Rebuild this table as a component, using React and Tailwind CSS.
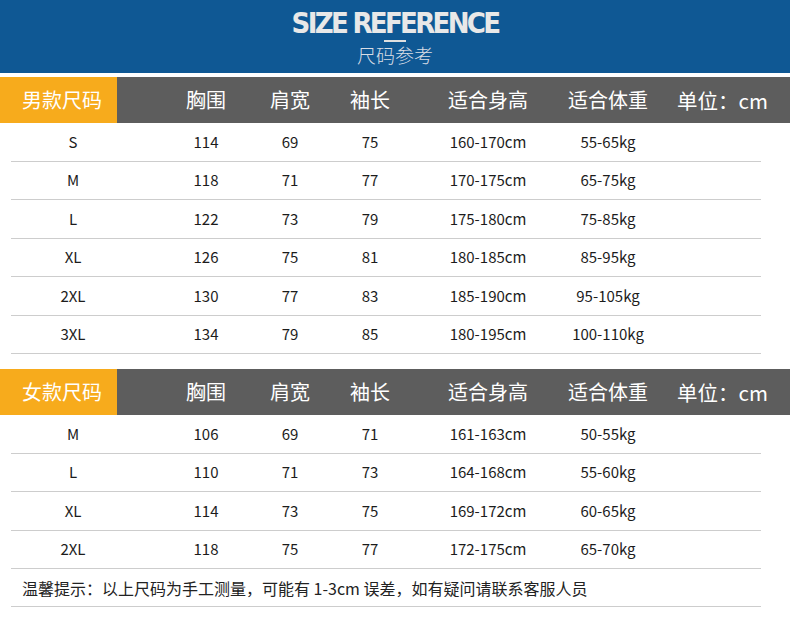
const cjk = { fontFamily: '"Noto Sans CJK SC", "Noto Sans", sans-serif' };

const headCols = "grid grid-cols-[146px_120px_48px_112px_124px_116px_1fr] items-center";
const rowCols = "grid grid-cols-[124px_142px_26px_134px_102px_138px_1fr] items-center";

const men = [
  ["S", "114", "69", "75", "160-170cm", "55-65kg"],
  ["M", "118", "71", "77", "170-175cm", "65-75kg"],
  ["L", "122", "73", "79", "175-180cm", "75-85kg"],
  ["XL", "126", "75", "81", "180-185cm", "85-95kg"],
  ["2XL", "130", "77", "83", "185-190cm", "95-105kg"],
  ["3XL", "134", "79", "85", "180-195cm", "100-110kg"],
];

const women = [
  ["M", "106", "69", "71", "161-163cm", "50-55kg"],
  ["L", "110", "71", "73", "164-168cm", "55-60kg"],
  ["XL", "114", "73", "75", "169-172cm", "60-65kg"],
  ["2XL", "118", "75", "77", "172-175cm", "65-70kg"],
];

function HeaderBar({ title }) {
  return (
    <div className={`${headCols} h-[46px] bg-[#5d5d5d] text-white text-[20px]`}>
      <div className="h-full">
        <div className="h-full w-[117px] bg-[#f7ab1c] flex items-center pl-[22px]">{title}</div>
      </div>
      <div className="text-center">胸围</div>
      <div className="text-center">肩宽</div>
      <div className="text-center">袖长</div>
      <div className="text-center">适合身高</div>
      <div className="text-center">适合体重</div>
      <div className="pl-[11px] text-[20.5px]">单位：cm</div>
    </div>
  );
}

function Rows({ data }) {
  return (
    <div>
      {data.map((r) => (
        <div key={r[0]} className={`${rowCols} ml-[11px] w-[750px] h-[38.5px] border-b border-[#cdcdcd] text-[15px] text-[#1c1c1c]`}>
          {r.map((c, i) => (
            <div key={i} className="text-center">{c}</div>
          ))}
          <div />
        </div>
      ))}
    </div>
  );
}

export default function App() {
  return (
    <div className="w-[790px] h-[636px] bg-white overflow-hidden" style={cjk}>
      <div className="h-[73px] bg-[#0f5894] flex flex-col items-center pt-[7px]">
        <div
          className="text-[29px] font-bold leading-[32px] text-[#e8e8e8] tracking-[-2.7px]"
          style={{ fontFamily: '"Liberation Sans Narrow", "DejaVu Sans Condensed", "Liberation Sans", sans-serif' }}
        >
          SIZE REFERENCE
        </div>
        <div className="w-[22px] h-[2px] bg-[#e0e0e0] mt-[1px]" />
        <div className="text-[19px] leading-[24px] text-[#d8dde5] font-light mt-[1px]">尺码参考</div>
      </div>
      <div className="h-[4px]" />
      <HeaderBar title="男款尺码" />
      <Rows data={men} />
      <div className="h-[15px]" />
      <HeaderBar title="女款尺码" />
      <Rows data={women} />
      <div className="ml-[11px] w-[750px] h-[38px] border-b border-[#cdcdcd] flex items-center pl-[11px] text-[16px] text-[#222]">
        温馨提示：以上尺码为手工测量，可能有 1-3cm 误差，如有疑问请联系客服人员
      </div>
    </div>
  );
}
